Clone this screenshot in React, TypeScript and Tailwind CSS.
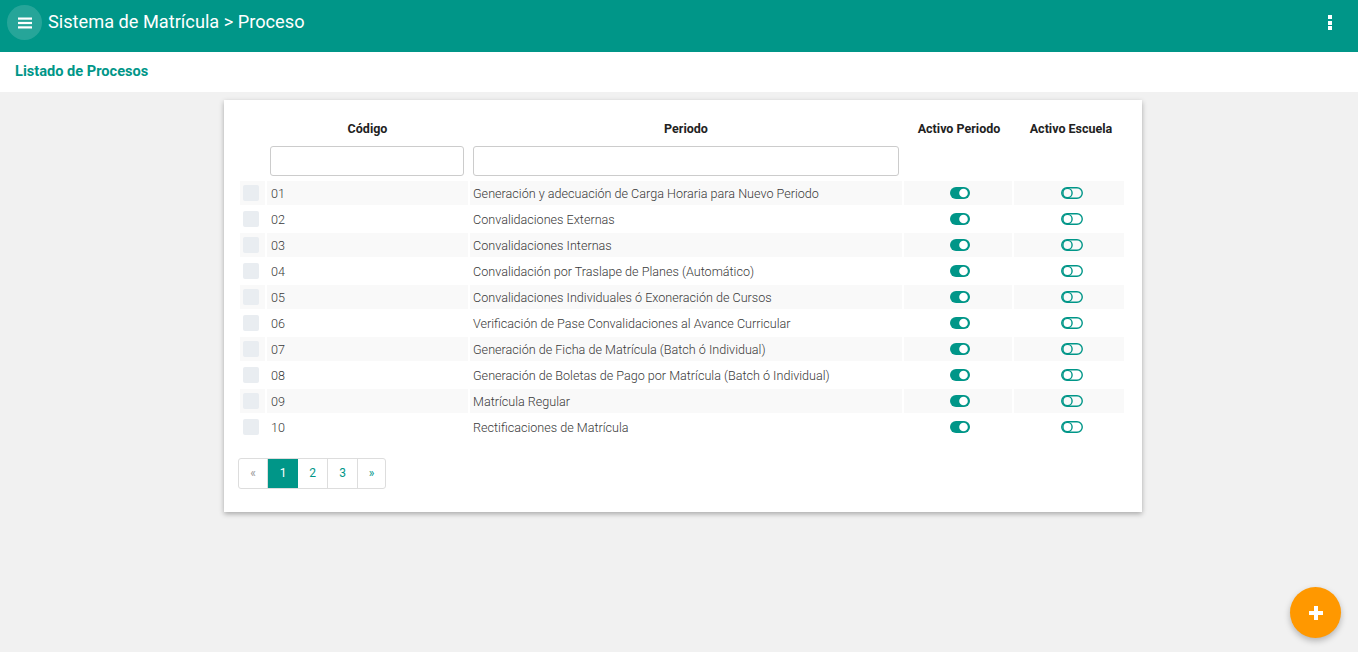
import React from "react"

const ROWS = [
  { code: "01", name: "Generación y adecuación de Carga Horaria para Nuevo Periodo" },
  { code: "02", name: "Convalidaciones Externas" },
  { code: "03", name: "Convalidaciones Internas" },
  { code: "04", name: "Convalidación por Traslape de Planes (Automático)" },
  { code: "05", name: "Convalidaciones Individuales ó Exoneración de Cursos" },
  { code: "06", name: "Verificación de Pase Convalidaciones al Avance Curricular" },
  { code: "07", name: "Generación de Ficha de Matrícula (Batch ó Individual)" },
  { code: "08", name: "Generación de Boletas de Pago por Matrícula (Batch ó Individual)" },
  { code: "09", name: "Matrícula Regular" },
  { code: "10", name: "Rectificaciones de Matrícula" },
]

function ToggleOn() {
  return (
    <svg width="20" height="12" viewBox="0 0 20 12">
      <rect x="0" y="0" width="20" height="12" rx="6" fill="#009688" />
      <circle cx="13.5" cy="6" r="4.3" fill="#fff" />
    </svg>
  )
}

function ToggleOff() {
  return (
    <svg width="22" height="12" viewBox="0 0 22 12">
      <rect x="0.75" y="0.75" width="20.5" height="10.5" rx="5.25" fill="none" stroke="#009688" strokeWidth="1.4" />
      <circle cx="6.5" cy="6" r="4.6" fill="none" stroke="#009688" strokeWidth="1.4" />
    </svg>
  )
}

export default function App() {
  return (
    <div className="min-h-[652px] bg-[#f1f1f1] relative" style={{ fontFamily: "Roboto, 'Liberation Sans', sans-serif" }}>
      {/* Top bar */}
      <div className="h-[52px] bg-[#009688] flex items-start pt-[5px] pl-[7px] pr-4">
        <div className="w-[35px] h-[35px] rounded-full bg-white/15 flex items-center justify-center">
          <svg width="14" height="12" viewBox="0 0 14 12">
            <rect x="0" y="0.5" width="14" height="2.2" fill="#fff" />
            <rect x="0" y="4.9" width="14" height="2.2" fill="#fff" />
            <rect x="0" y="9.3" width="14" height="2.2" fill="#fff" />
          </svg>
        </div>
        <h1 className="ml-[6px] mt-[8px] text-white text-[18.2px] leading-none">Sistema de Matrícula &gt; Proceso</h1>
        <div className="ml-auto mt-[10px] flex flex-col gap-[1.5px] mr-[10px]">
          <span className="w-[4px] h-[4px] bg-white" />
          <span className="w-[4px] h-[4px] bg-white" />
          <span className="w-[4px] h-[4px] bg-white" />
        </div>
      </div>

      {/* Sub header */}
      <div className="h-[40px] bg-white flex items-center px-[15px]">
        <h2 className="text-[#009688] text-[14.6px] font-bold">Listado de Procesos</h2>
      </div>

      {/* Card */}
      <div className="mt-2 ml-[224px] w-[918px] bg-white shadow-[0_2px_5px_rgba(0,0,0,0.3)] px-[14px] pt-[18px] pb-[23px]">
        <table className="w-[888px] border-separate border-spacing-[2px] text-[12px]">
          <thead>
            <tr className="text-[#222]">
              <th className="w-[25px]" />
              <th className="h-[16px] font-bold w-[201px] text-[12.5px]">Código</th>
              <th className="font-bold w-[431px] text-[12.5px]">Periodo</th>
              <th className="font-bold w-[108px] pl-[2px] text-[12.5px]">Activo Periodo</th>
              <th className="font-bold pl-[4px] text-[12.5px]">Activo Escuela</th>
            </tr>
            <tr>
              <th />
              <th className="pt-[5px] pb-[2px] px-[3px] text-left">
                <input className="w-[194px] h-[30px] border border-[#ccc] rounded-[3px]" />
              </th>
              <th className="pt-[5px] pb-[3px] px-[3px] text-left">
                <input className="w-[426px] h-[30px] border border-[#ccc] rounded-[3px]" />
              </th>
              <th />
              <th />
            </tr>
          </thead>
          <tbody className="text-[#3a3a3a] font-light text-[12.6px]">
            {ROWS.map((r, i) => {
              const bg = i % 2 === 0 ? "bg-[#f9f9f9]" : "bg-white"
              return (
                <tr key={r.code} className="h-[24px]">
                  <td className={`${bg} pl-[3px]`}>
                    <div className="w-[16px] h-[16px] rounded-[2px] bg-[#e9edf1]" />
                  </td>
                  <td className={`${bg} pl-[4px] pr-[3px] pt-[3px]`}>{r.code}</td>
                  <td className={`${bg} px-[3px] pt-[3px]`}>{r.name}</td>
                  <td className={bg}>
                    <div className="flex justify-center pl-[3px]"><ToggleOn /></div>
                  </td>
                  <td className={bg}>
                    <div className="flex justify-center pl-[6px]"><ToggleOff /></div>
                  </td>
                </tr>
              )
            })}
          </tbody>
        </table>

        {/* Pagination */}
        <div className="mt-[17px] inline-flex border border-[#ddd] rounded-[3px] overflow-hidden text-[12px]">
          <span className="w-[29px] h-[29px] flex items-center justify-center text-[#999] border-r border-[#ddd]">«</span>
          <span className="w-[30px] h-[29px] flex items-center justify-center bg-[#009688] text-white">1</span>
          <span className="w-[30px] h-[29px] flex items-center justify-center text-[#009688] border-r border-[#ddd]">2</span>
          <span className="w-[30px] h-[29px] flex items-center justify-center text-[#009688] border-r border-[#ddd]">3</span>
          <span className="w-[27px] h-[29px] flex items-center justify-center text-[#009688]">»</span>
        </div>
      </div>

      {/* FAB */}
      <button className="absolute right-[17px] top-[587px] w-[51px] h-[51px] rounded-full bg-[#ff9800] shadow-[0_3px_6px_rgba(0,0,0,0.25)] flex items-center justify-center">
        <svg width="14" height="14" viewBox="0 0 14 14">
          <rect x="5" y="0" width="4" height="14" fill="#fff" />
          <rect x="0" y="5" width="14" height="4" fill="#fff" />
        </svg>
      </button>
    </div>
  )
}
